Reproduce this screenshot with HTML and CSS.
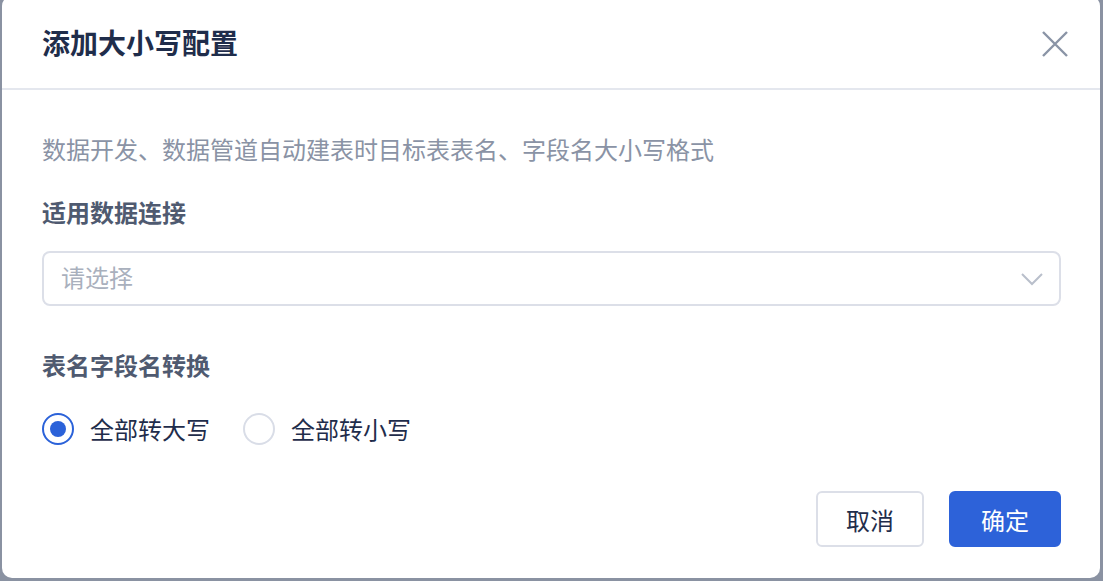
FILE: index.html
```html
<!DOCTYPE html>
<html lang="zh-CN">
<head>
    <meta charset="UTF-8">
    <meta name="viewport" content="width=device-width, initial-scale=1.0">
    <title>添加大小写配置</title>
    <link rel="stylesheet" href="styles.css">
</head>
<body>

<div class="modal">
    <!-- Header -->
    <div class="modal-header">
        <h2 class="modal-title">添加大小写配置</h2>
        <span class="modal-close">
            <svg width="26" height="26" viewBox="0 0 26 26">
                <path d="M1 1 L25 25 M25 1 L1 25" stroke="#8a94a6" stroke-width="2.4" fill="none"/>
            </svg>
        </span>
    </div>

    <!-- Body -->
    <div class="modal-body">
        <p class="desc">数据开发、数据管道自动建表时目标表表名、字段名大小写格式</p>

        <div class="field-label">适用数据连接</div>
        <div class="select">
            <span class="placeholder">请选择</span>
            <svg class="chevron" width="22" height="14" viewBox="0 0 22 14">
                <path d="M1 2 L11 12 L21 2" stroke="#b9bfcb" stroke-width="2" fill="none"/>
            </svg>
        </div>

        <div class="field-label second">表名字段名转换</div>
        <div class="radio-group">
            <label class="radio checked"><span class="radio-dot"></span>全部转大写</label>
            <label class="radio"><span class="radio-dot"></span>全部转小写</label>
        </div>
    </div>

    <!-- Footer -->
    <div class="modal-footer">
        <button class="btn">取消</button>
        <button class="btn primary">确定</button>
    </div>
</div>

</body>
</html>
```

FILE: styles.css
```css
body {
    margin: 0;
    padding: 0;
    height: 100vh;
    overflow: hidden;
    background-color: #8a92a2;
    font-family: "Noto Sans CJK SC", "Noto Sans", sans-serif;
}
.modal {
    box-sizing: border-box;
    width: 1098px;
    height: 582px;
    margin: -4px 0 0 2px;
    background: white;
    border-radius: 10px;
    display: flex;
    flex-direction: column;
}
.modal-header {
    box-sizing: border-box;
    height: 94px;
    padding: 0 32px 0 40px;
    border-bottom: 2px solid #e4e7ee;
    display: flex;
    align-items: center;
    justify-content: space-between;
}
.modal-title {
    margin: 0;
    font-size: 28px;
    line-height: 36px;
    font-weight: bold;
    color: #1f2d4b;
}
.modal-close {
    display: flex;
    padding-top: 4px;
    cursor: pointer;
}
.modal-body {
    padding: 43px 39px 0 40px;
}
.desc {
    margin: 0;
    font-size: 24px;
    line-height: 32px;
    color: #8a93a5;
}
.field-label {
    margin-top: 31px;
    font-size: 24px;
    line-height: 32px;
    font-weight: bold;
    color: #4f5a70;
}
.field-label.second {
    margin-top: 43px;
}
.select {
    box-sizing: border-box;
    height: 55px;
    margin-top: 23px;
    padding: 0 16px 0 17px;
    border: 2px solid #dcdfe8;
    border-radius: 8px;
    display: flex;
    align-items: center;
    justify-content: space-between;
}
.placeholder {
    font-size: 24px;
    line-height: 32px;
    margin-top: -3px;
    color: #a9b0bd;
}
.radio-group {
    margin-top: 32px;
    display: flex;
    align-items: center;
    gap: 33px;
}
.radio {
    display: flex;
    align-items: center;
    gap: 16px;
    font-size: 24px;
    line-height: 32px;
    color: #1f2d4b;
    cursor: pointer;
}
.radio-dot {
    box-sizing: border-box;
    width: 32px;
    height: 32px;
    border: 2px solid #d9dde7;
    border-radius: 50%;
    display: flex;
    align-items: center;
    justify-content: center;
}
.radio.checked .radio-dot {
    border-color: #2b62d9;
}
.radio.checked .radio-dot::after {
    content: "";
    width: 16px;
    height: 16px;
    border-radius: 50%;
    background-color: #2b62d9;
}
.modal-footer {
    margin-top: 46px;
    padding: 0 39px 0 0;
    display: flex;
    justify-content: flex-end;
    gap: 25px;
}
.btn {
    height: 56px;
    padding: 0 28px;
    font-family: inherit;
    font-size: 24px;
    color: #1f2d4b;
    background: white;
    border: 2px solid #dcdfe8;
    border-radius: 6px;
    cursor: pointer;
}
.btn.primary {
    padding: 0 30px;
    color: white;
    background-color: #2d62d9;
    border-color: #2d62d9;
}
```
